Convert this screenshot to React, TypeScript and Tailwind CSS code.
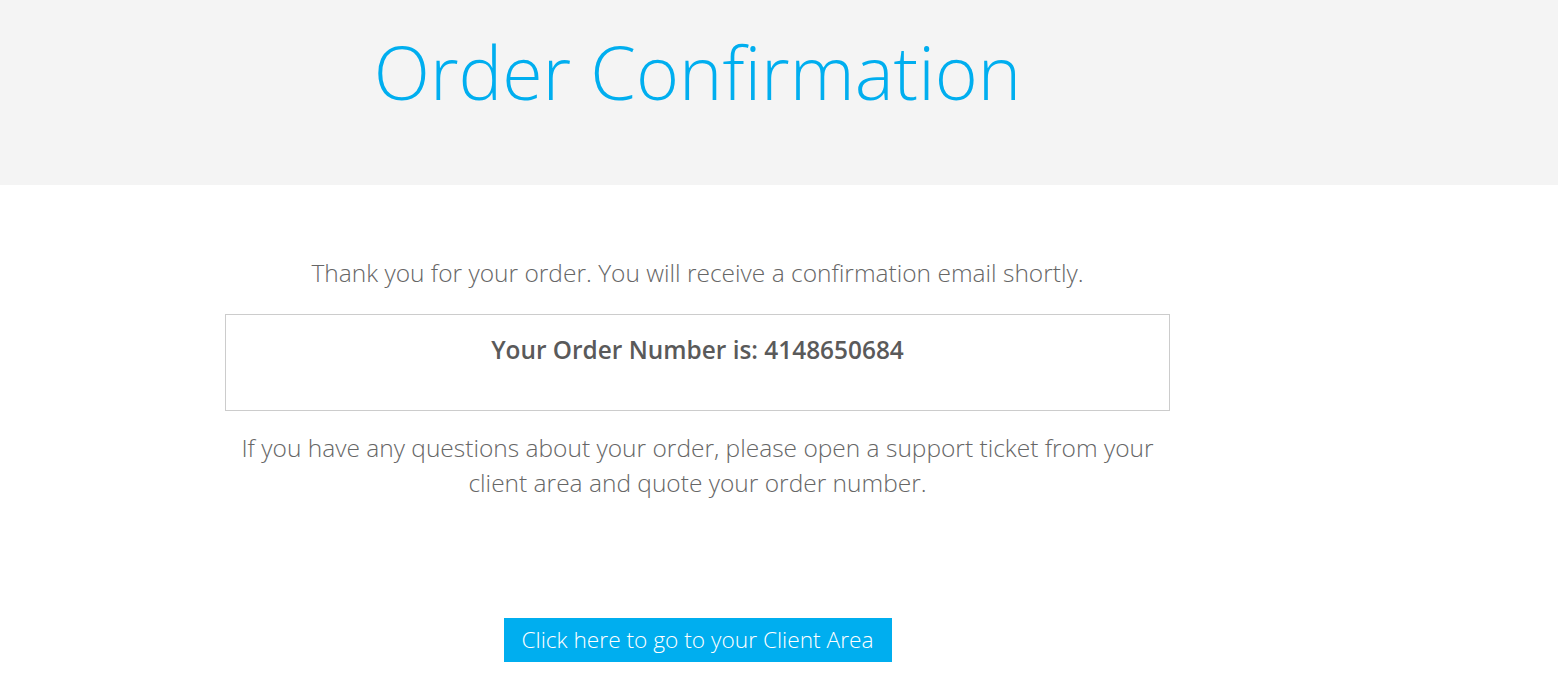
export default function App() {
    return (
        <div className="min-h-[693px] bg-white font-['Open_Sans',sans-serif]">
            <header className="h-[185px] bg-[#f4f4f4]">
                <div className="ml-[225px] w-[945px] pt-[24px] text-center">
                    <h1 className="text-[73.5px] font-light leading-[96px] text-[#00aeef]">Order Confirmation</h1>
                </div>
            </header>
            <main className="ml-[225px] w-[945px] pt-[70px] text-center">
                <p className="text-[24.5px] font-light leading-[35px] text-[#666]">
                    Thank you for your order. You will receive a confirmation email shortly.
                </p>
                <div className="mt-[24px] h-[97px] border border-[#ccc] pt-[19px]">
                    <p className="text-[24.4px] font-semibold leading-[32px] text-[#5a5a5a]">Your Order Number is: 4148650684</p>
                </div>
                <p className="mt-[19px] px-[8px] text-[24.5px] font-light leading-[35px] text-[#666]">
                    If you have any questions about your order, please open a support ticket from your client area and quote
                    your order number.
                </p>
                <div className="mt-[118px] flex justify-center">
                    <a
                        href="#"
                        className="flex h-[44px] w-[388px] items-center justify-center bg-[#00aeef] text-[22.7px] font-light text-white"
                    >
                        Click here to go to your Client Area
                    </a>
                </div>
            </main>
        </div>
    );
}
